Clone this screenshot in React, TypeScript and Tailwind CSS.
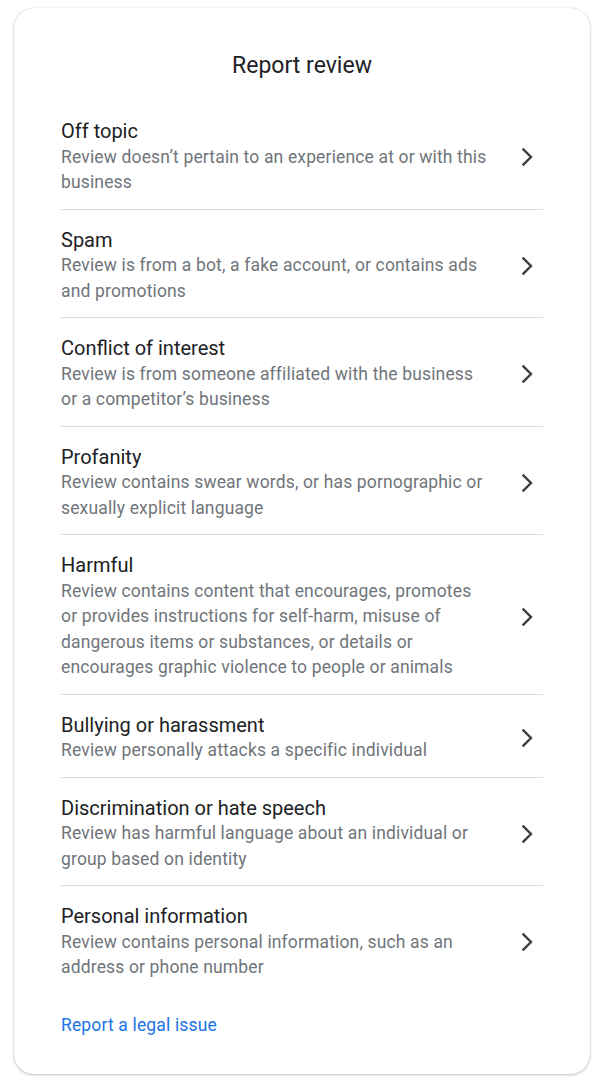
const REASONS = [
  { title: 'Off topic', desc: 'Review doesn’t pertain to an experience at or with this business' },
  { title: 'Spam', desc: 'Review is from a bot, a fake account, or contains ads and promotions' },
  { title: 'Conflict of interest', desc: 'Review is from someone affiliated with the business or a competitor’s business' },
  { title: 'Profanity', desc: 'Review contains swear words, or has pornographic or sexually explicit language' },
  {
    title: 'Harmful',
    desc: 'Review contains content that encourages, promotes or provides instructions for self-harm, misuse of dangerous items or substances, or details or encourages graphic violence to people or animals',
  },
  { title: 'Bullying or harassment', desc: 'Review personally attacks a specific individual' },
  { title: 'Discrimination or hate speech', desc: 'Review has harmful language about an individual or group based on identity' },
  { title: 'Personal information', desc: 'Review contains personal information, such as an address or phone number' },
];

function Chevron() {
  return (
    <svg width="12" height="20" viewBox="0 0 12 20" className="shrink-0 mr-[10px]" fill="none">
      <polyline points="1.6,1.6 10,10 1.6,18.4" stroke="#3c4043" strokeWidth="2.4" />
    </svg>
  );
}

export default function App() {
  return (
    <div className="min-h-screen bg-white pt-[8px] px-[14px] pb-[10px]" style={{ fontFamily: 'Roboto, "Noto Sans", sans-serif' }}>
      <div className="w-[576px] rounded-[20px] bg-white shadow-[0_1px_3px_rgba(0,0,0,0.24),0_0_1px_rgba(0,0,0,0.18)] pb-[36px]">
        <h2 className="pt-[43px] pb-[20px] text-center text-[23px] leading-[30px] text-[#202124]">Report review</h2>

        <div className="px-[47px]">
          {REASONS.map((r, i) => (
            <button
              key={r.title}
              className={
                'w-full flex items-center justify-between text-left pt-[18px] pb-[13px] ' +
                (i < REASONS.length - 1 ? 'border-b border-[#dadce0]' : '')
              }
            >
              <div className="w-[429px]">
                <div className="text-[20px] leading-[25.5px] text-[#202124]">{r.title}</div>
                <div className="text-[17.5px] leading-[25.5px] tracking-[0.15px] text-[#70757a]">{r.desc}</div>
              </div>
              <Chevron />
            </button>
          ))}
        </div>

        <div className="px-[47px] pt-[19px]">
          <a className="text-[17.5px] leading-[25px] tracking-[0.15px] text-[#1a73e8]">Report a legal issue</a>
        </div>
      </div>
    </div>
  );
}
